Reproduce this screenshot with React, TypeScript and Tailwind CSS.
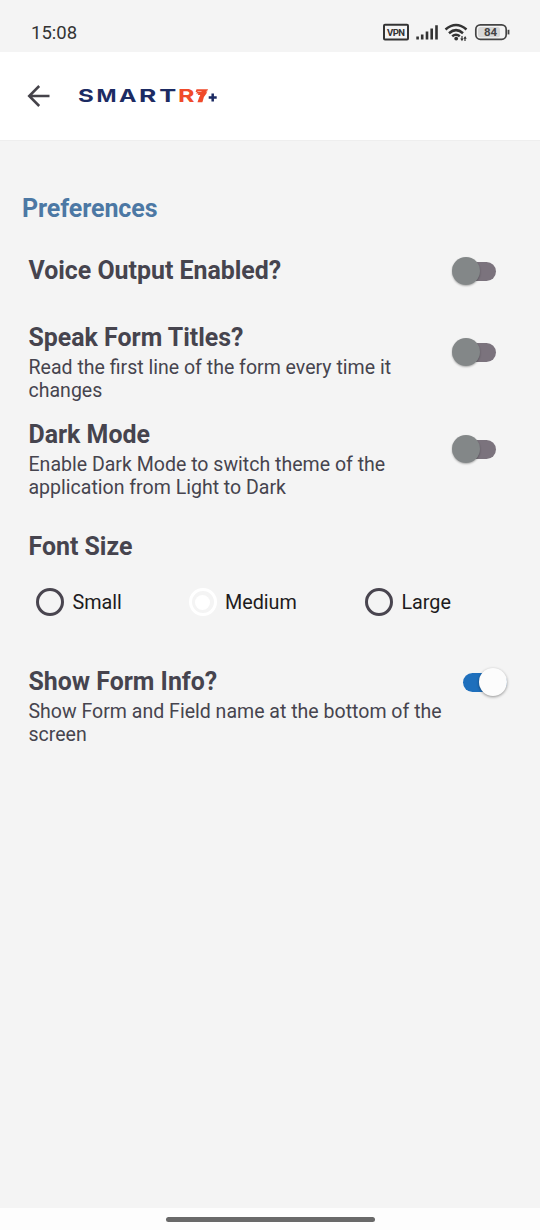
import React from 'react';

function StatusBar() {
  return (
    <div className="flex h-[52px] items-start justify-between bg-[#f4f4f4] pl-[31px] pr-[30px]">
      <span className="mt-[21px] text-[18.5px] leading-[24px] text-[#333]">15:08</span>
      <svg className="mt-[20px]" width="128" height="24" viewBox="382 20 128 24" fill="none">
        <rect x="384" y="24.8" width="24" height="14.6" rx="1" stroke="#333" strokeWidth="2" />
        <text x="396" y="35.6" textAnchor="middle" fontSize="9.5" fontWeight="700" fill="#333" textLength="18" fontFamily="Roboto, sans-serif">VPN</text>
        <path d="M417.6 39.5v-3M422.2 39.5v-5M427 39.5v-8M431.7 39.5v-11M436.5 39.5v-14.2" stroke="#333" strokeWidth="2.6" />
        <path d="M445.5 29.5Q456 20.5 466.5 29.5M449 33.2Q456 27 463 33.2M452.2 36.3Q456 33.2 459.8 36.3" stroke="#333" strokeWidth="2.5" />
        <circle cx="456.2" cy="38.6" r="1.9" fill="#333" />
        <path d="M462 36v3.5M465 41v-3.5" stroke="#333" strokeWidth="1.2" />
        <path d="M460.2 38.5h3.3l-1.5 2.7zM463.5 38.8h3.2l-1.6-2.8z" fill="#333" />
        <rect x="475.8" y="24.9" width="30.4" height="14.4" rx="4.5" stroke="#444" strokeWidth="1.7" />
        <rect x="478" y="27" width="22" height="10.2" rx="2.5" fill="#d8d8d8" />
        <path d="M508.5 29.8v4.6" stroke="#444" strokeWidth="1.8" />
        <text x="490.5" y="36.3" textAnchor="middle" fontSize="11.5" fontWeight="700" fill="#444" fontFamily="Roboto, sans-serif">84</text>
      </svg>
    </div>
  );
}

function Letter({ char, x, width, fill }: { char: string; x: number; width: number; fill: string }) {
  return (
    <text x={x} y="22.3" fontSize="17.6" fontWeight="700" fontFamily="Inter, sans-serif" fill={fill} textLength={width} lengthAdjust="spacingAndGlyphs">
      {char}
    </text>
  );
}

function Logo() {
  return (
    <svg width="142" height="32" viewBox="78 0 142 32" role="img" aria-label="SMARTR7+">
      <Letter char="S" x={78} width={15.8} fill="#1c2b63" />
      <Letter char="M" x={96.5} width={20} fill="#1c2b63" />
      <Letter char="A" x={119} width={17.5} fill="#1c2b63" />
      <Letter char="R" x={139} width={17.3} fill="#1c2b63" />
      <Letter char="T" x={159.2} width={17} fill="#1c2b63" />
      <Letter char="R" x={178} width={16.5} fill="#f04a2a" />
      <path d="M196.5 9.3h11.6l-1.8 4.4-2.4 3.2-1.5 5.300h-4.900l1.600-4.700 1.200-2.600h-2.600l.8-1.400h-2.400l1-1.400h-1.500z" fill="#f04a2a" />
      <path d="M197.500 11.500h4M206.300 12.300l1.400-2.500" stroke="#fff" strokeWidth=".5" />
      <path d="M212.700 13.500v8M208.700 17.500h8" stroke="#1c2b63" strokeWidth="2.5" />
    </svg>
  );
}

function Header() {
  return (
    <header className="flex h-[88px] items-center bg-white pl-[26px]">
      <svg width="26" height="26" viewBox="0 0 26 26" fill="none" stroke="#45434a" strokeWidth="2.5" className="mr-[26px]">
        <path d="M23.5 13H3.5M13.2 3L3.2 13l10 10" />
      </svg>
      <Logo />
    </header>
  );
}

function Switch({ on = false }: { on?: boolean }) {
  return on ? (
    <div className="flex h-7 w-[45px] items-center justify-end rounded-full">
      <div className="-mr-7 h-[19px] w-11 rounded-full bg-[#1e6fbc]" />
      <div className="z-10 h-7 w-7 shrink-0 rounded-full bg-[#fcfcfc] shadow-[0_1px_3px_rgba(0,0,0,0.4)]" />
    </div>
  ) : (
    <div className="flex h-7 w-[45px] items-center">
      <div className="z-10 h-7 w-7 shrink-0 rounded-full bg-[#838788] shadow-[0_1px_2px_rgba(0,0,0,0.3)]" />
      <div className="-ml-6 h-[19px] w-10 shrink-0 rounded-full bg-[#7b737d]" />
    </div>
  );
}

function Setting({ title, lines = [], className, switchClass, on }: { title: string; lines?: string[]; className: string; switchClass: string; on?: boolean }) {
  return (
    <section className={`flex items-start justify-between pl-[28.5px] ${className}`}>
      <div>
        <h2 className="mb-[3px] text-[24.9px] font-bold leading-[30px] whitespace-nowrap">{title}</h2>
        {lines.map((line) => (
          <p key={line} className="text-[19.55px] leading-[23px] whitespace-nowrap">{line}</p>
        ))}
      </div>
      <div className={switchClass}><Switch on={on} /></div>
    </section>
  );
}

function Radio({ label, selected = false }: { label: string; selected?: boolean }) {
  return (
    <label className="flex items-center gap-2 text-[19.8px] leading-[24px] text-[#1d1b20]">
      <span className={`flex h-7 w-7 items-center justify-center rounded-full border-[3px] ${selected ? 'border-white' : 'border-[#49454f]'}`}>
        {selected && <span className="h-[15px] w-[15px] rounded-full bg-white" />}
      </span>
      <span className="pt-[2px]">{label}</span>
    </label>
  );
}

export default function App() {
  return (
    <div className="flex h-[1230px] w-[540px] flex-col overflow-hidden bg-[#f4f4f4] font-[Roboto,sans-serif] text-[#46444e]">
      <StatusBar />
      <Header />
      <main className="flex-1 border-t border-[#eeeeee]">
        <h1 className="mt-[53px] pl-[22px] text-[25px] font-bold leading-[30px] tracking-[-0.1px] text-[#4c78a4]">Preferences</h1>
        <Setting title="Voice Output Enabled?" className="mt-[32px] h-[67px]" switchClass="mt-[1px] mr-[43px]" />
        <Setting title="Speak Form Titles?" lines={['Read the first line of the form every time it', 'changes']} className="h-[97px]" switchClass="mt-[15px] mr-[43px]" />
        <Setting title="Dark Mode" lines={['Enable Dark Mode to switch theme of the', 'application from Light to Dark']} className="h-[112px]" switchClass="mt-[15px] mr-[43px]" />
        <h2 className="pl-[28.5px] text-[24.9px] font-bold leading-[30px]">Font Size</h2>
        <div className="mt-[26px] grid grid-cols-[152.5px_176.5px_1fr] pl-[36.4px]">
          <Radio label="Small" />
          <Radio label="Medium" selected />
          <Radio label="Large" />
        </div>
        <Setting title="Show Form Info?" lines={['Show Form and Field name at the bottom of the', 'screen']} className="mt-[51px]" switchClass="mt-[1px] mr-[33px]" on />
      </main>
      <footer className="flex h-[22px] justify-center bg-[#fdfdfd] pt-[9px]">
        <div className="h-[5px] w-[209px] rounded-full bg-[#696969]" />
      </footer>
    </div>
  );
}
